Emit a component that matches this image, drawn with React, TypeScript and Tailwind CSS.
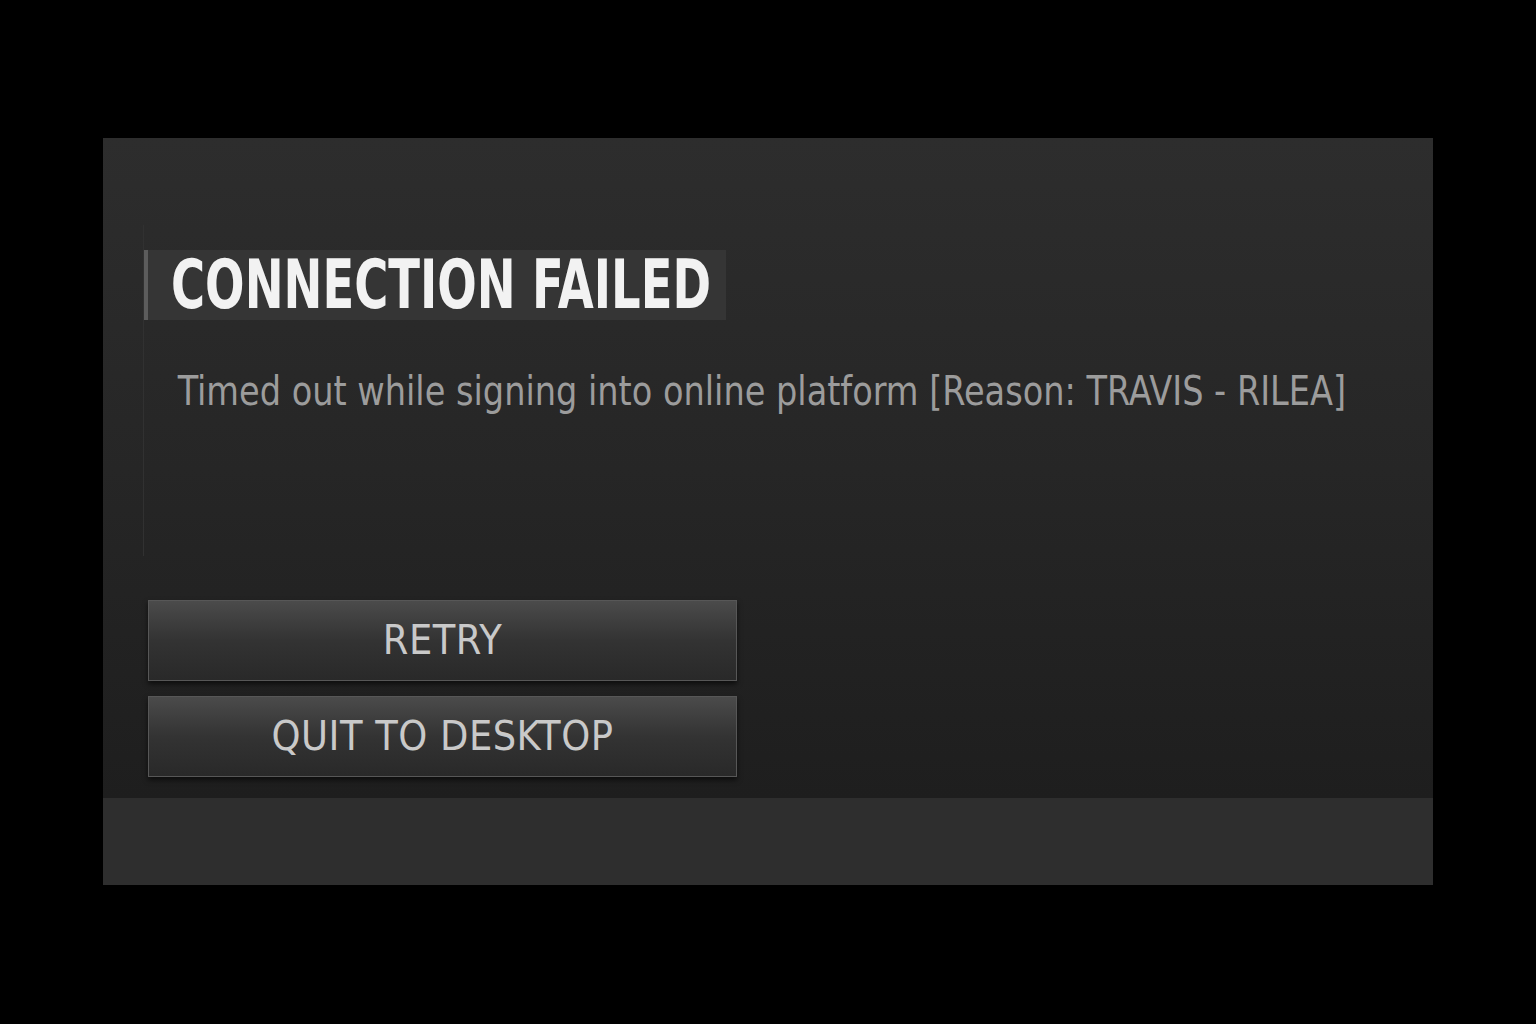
import React from "react"

function MenuButton({ label }: { label: string }) {
  return (
    <button className="flex h-[81px] w-[589px] items-center justify-center border border-[#575757] bg-gradient-to-b from-[#4b4b4b] via-[#333333] to-[#292929] shadow-[0_3px_5px_rgba(0,0,0,0.6)]">
      <span className="whitespace-nowrap font-['DejaVu_Sans_Condensed',sans-serif] text-[41px] leading-none tracking-[0.5px] text-[#c9c9c9]">
        {label}
      </span>
    </button>
  )
}

export default function App() {
  return (
    <div className="min-h-[1024px] w-full bg-black pt-[138px] pl-[103px]">
      <div className="w-[1330px]">
        {/* main dialog area */}
        <div className="flex h-[660px] flex-col bg-gradient-to-b from-[#2d2d2d] via-[#262626] to-[#1e1e1e] pl-[40px]">
          <div className="mt-[87px] flex flex-col border-l border-[#313131] pt-[25px] pb-[144px]">
            <div className="flex h-[70px] w-[582px] items-center border-l-4 border-[#5c5c5c] bg-[#353535] pl-[23px]">
              <span className="origin-left scale-x-[0.76] whitespace-nowrap font-['DejaVu_Sans_Condensed',sans-serif] text-[68px] font-bold leading-none text-[#f2f2f2]">
                CONNECTION FAILED
              </span>
            </div>
            <p className="mt-[51px] origin-left scale-x-[0.91] whitespace-nowrap pl-[37px] font-['DejaVu_Sans_Condensed',sans-serif] text-[41px] leading-none text-[#9c9c9c]">
              Timed out while signing into online platform [Reason: TRAVIS - RILEA]
            </p>
          </div>
          <div className="mt-[44px] flex flex-col gap-[15px] pl-[5px]">
            <MenuButton label="RETRY" />
            <MenuButton label="QUIT TO DESKTOP" />
          </div>
        </div>
        {/* footer strip */}
        <div className="h-[87px] bg-[#2e2e2e]" />
      </div>
    </div>
  )
}
